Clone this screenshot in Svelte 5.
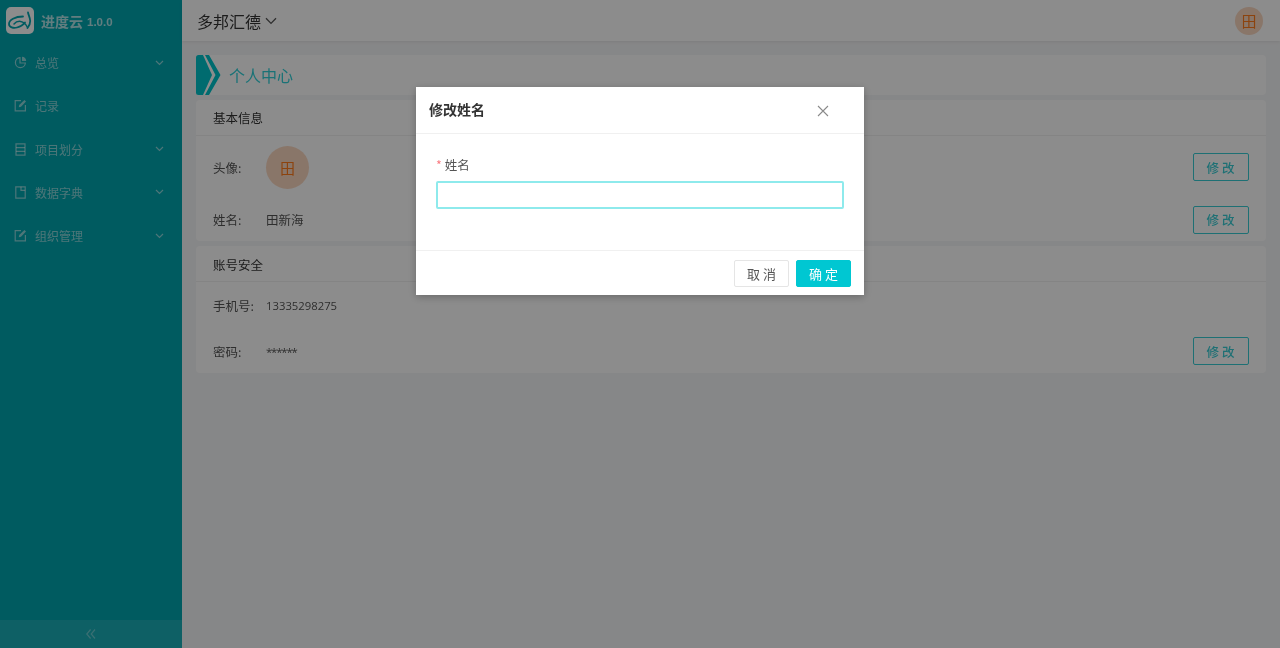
<script>
  const menu = [
    { label: '总览', icon: 'pie', arrow: true },
    { label: '记录', icon: 'edit', arrow: false },
    { label: '项目划分', icon: 'list', arrow: true },
    { label: '数据字典', icon: 'file', arrow: true },
    { label: '组织管理', icon: 'edit', arrow: true }
  ];
</script>

<div class="layout">
  <aside class="sider">
    <div class="logo">
      <div class="logo-box">
        <svg width="28" height="27" viewBox="0 0 28 27" fill="none" stroke="#00a6b0" stroke-linecap="round">
          <path d="M17 9.5C9 9.5 3 13 3 17C3 20.5 7.5 21.5 11 20.5C14.5 19.5 17.5 17.5 19 15.5" stroke-width="1.8" />
          <path d="M8 17C11 13.5 18 12.5 21.5 20.5" stroke-width="1.5" />
          <path d="M22 5.5C22.5 9 27 14.5 21.5 21" stroke-width="1.8" />
        </svg>
      </div>
      <span class="logo-name">进度云</span>
      <span class="logo-version">1.0.0</span>
    </div>
    <nav class="menu">
      {#each menu as item}
        <div class="menu-item">
          <svg class="menu-icon" width="13" height="13" viewBox="0 0 13 13" fill="none" stroke="currentColor" stroke-width="1.2">
            {#if item.icon === 'pie'}
              <path d="M6 1.6A5 5 0 1 0 11.4 7H6Z" />
              <path d="M8 .8A4.5 4.5 0 0 1 12.2 5H8Z" fill="currentColor" stroke="none" />
            {:else if item.icon === 'edit'}
              <path d="M7 1.6H1.2V11.8H11.4V6" />
              <path d="M4.8 8.2L5.2 6L10.4 1L12 2.6L7 7.8Z" fill="currentColor" stroke="none" />
            {:else if item.icon === 'list'}
              <path d="M2 .8H11V12.2H2Z" />
              <path d="M2 4.6H11M2 8.4H11" />
            {:else}
              <path d="M1.8 .8H11.2V12.2H1.8Z" />
              <path d="M7 .8V4.4H11.2" />
            {/if}
          </svg>
          <span class="menu-label">{item.label}</span>
          {#if item.arrow}
            <svg class="menu-arrow" width="9" height="6" viewBox="0 0 9 6" fill="none" stroke="currentColor" stroke-width="1.2">
              <path d="M1 1L4.5 4.5L8 1" />
            </svg>
          {/if}
        </div>
      {/each}
    </nav>
    <div class="collapse">
      <svg width="10" height="10" viewBox="0 0 10 10" fill="none" stroke="currentColor" stroke-width="1.2">
        <path d="M4.6 .5L.8 5L4.6 9.5M9 .5L5.2 5L9 9.5" />
      </svg>
    </div>
  </aside>

  <div class="right">
    <header class="topbar">
      <span class="org">多邦汇德</span>
      <svg class="org-arrow" width="12" height="8" viewBox="0 0 12 8" fill="none" stroke="currentColor" stroke-width="1.3">
        <path d="M1 1.2L6 6.4L11 1.2" />
      </svg>
      <div class="avatar small">田</div>
    </header>

    <main class="content">
      <div class="page-title">
        <svg class="chevron" width="25" height="40" viewBox="0 0 25 40">
          <path d="M2.5 0H7L16 20L7 40H2.5Q0 40 0 37.5V2.5Q0 0 2.5 0Z" fill="#00c4ca" />
          <path d="M9 0H13L24.5 20L13 40H9L19.5 20Z" fill="#00c4ca" />
        </svg>
        <span>个人中心</span>
      </div>

      <section class="card">
        <div class="card-head up">基本信息</div>
        <div class="row avatar-row">
          <span class="key">头像:</span>
          <div class="avatar">田</div>
          <button class="edit">修改</button>
        </div>
        <div class="row name-row">
          <span class="key">姓名:</span>
          <span class="val">田新海</span>
          <button class="edit">修改</button>
        </div>
      </section>

      <section class="card">
        <div class="card-head down">账号安全</div>
        <div class="row phone-row">
          <span class="key">手机号:</span>
          <span class="val digits">13335298275</span>
        </div>
        <div class="row pwd-row">
          <span class="key">密码:</span>
          <span class="val digits stars">******</span>
          <button class="edit">修改</button>
        </div>
      </section>
    </main>
  </div>
</div>

<div class="mask"></div>

<div class="modal">
  <div class="modal-head">
    <span>修改姓名</span>
    <svg width="12" height="12" viewBox="0 0 12 12" fill="none" stroke="#8a8a8a" stroke-width="1.1">
      <path d="M1 1L11 11M11 1L1 11" />
    </svg>
  </div>
  <div class="modal-body">
    <div class="field-label"><i>*</i>姓名</div>
    <input class="field-input" type="text" />
  </div>
  <div class="modal-foot">
    <button class="btn">取消</button>
    <button class="btn primary">确定</button>
  </div>
</div>

<style>
  :global(body) {
    margin: 0;
    font-family: "Noto Sans CJK SC", "Liberation Sans", sans-serif;
    overflow: hidden;
  }
  .layout {
    display: flex;
    height: 648px;
    filter: blur(0.5px);
  }
  .sider {
    width: 182px;
    flex: none;
    display: flex;
    flex-direction: column;
    background: #00a6b0;
    color: rgba(255, 255, 255, 0.55);
  }
  .logo {
    height: 41px;
    display: flex;
    align-items: center;
    padding-left: 6px;
  }
  .logo-box {
    width: 28px;
    height: 27px;
    border-radius: 5px;
    background: #fff;
    margin-right: 7px;
  }
  .logo-box svg {
    display: block;
  }
  .logo-name {
    font-size: 14px;
    font-weight: 700;
    color: rgba(255, 255, 255, 0.7);
  }
  .logo-version {
    font-size: 11.5px;
    font-weight: 700;
    font-family: "Liberation Sans", sans-serif;
    margin-left: 4px;
    margin-top: 2px;
    color: rgba(255, 255, 255, 0.7);
  }
  .menu {
    flex: 1;
  }
  .menu-item {
    height: 43.25px;
    display: flex;
    align-items: center;
    padding: 0 18px 0 14px;
    font-size: 12px;
  }
  .menu-icon {
    margin-right: 8px;
  }
  .menu-label {
    flex: 1;
  }
  .collapse {
    height: 28px;
    display: flex;
    align-items: center;
    justify-content: center;
    background: rgba(255, 255, 255, 0.1);
    color: rgba(255, 255, 255, 0.35);
  }
  .right {
    flex: 1;
    display: flex;
    flex-direction: column;
    background: #f5f6f7;
    min-width: 0;
  }
  .topbar {
    height: 41px;
    display: flex;
    align-items: center;
    padding: 0 17px 0 15px;
    background: #fff;
    box-shadow: 0 1px 3px rgba(0, 0, 0, 0.08);
    color: #333;
  }
  .org {
    font-size: 16px;
    margin-right: 4px;
  }
  .org-arrow {
    color: #555;
  }
  .avatar {
    width: 43px;
    height: 43px;
    border-radius: 50%;
    background: #fad7c0;
    color: #ff7a1a;
    font-size: 15px;
    display: flex;
    align-items: center;
    justify-content: center;
  }
  .avatar.small {
    width: 28px;
    height: 28px;
    margin-left: auto;
  }
  .content {
    padding: 14px 14px 0;
    display: flex;
    flex-direction: column;
    gap: 5px;
  }
  .page-title {
    height: 40px;
    display: flex;
    align-items: center;
    background: #fff;
    border-radius: 4px;
    color: #30d0d8;
    font-size: 16px;
  }
  .chevron {
    margin-right: 8px;
  }
  .card {
    background: #fff;
    border-radius: 4px;
    font-size: 12.5px;
    color: #555;
  }
  .card-head {
    box-sizing: border-box;
    height: 36px;
    display: flex;
    align-items: center;
    padding-left: 17px;
    color: #333;
    border-bottom: 1px solid #f0f0f0;
  }
  .card-head.up {
    padding-bottom: 1px;
  }
  .card-head.down {
    padding-top: 1px;
  }
  .row {
    display: flex;
    align-items: center;
    padding: 0 17px;
  }
  .avatar-row {
    height: 62px;
  }
  .name-row {
    height: 43px;
  }
  .phone-row {
    height: 47px;
  }
  .pwd-row {
    height: 44px;
  }
  .key {
    width: 53px;
    flex: none;
  }
  .digits {
    font-family: "Open Sans", sans-serif;
    font-size: 11.3px;
  }
  .stars {
    letter-spacing: -1.1px;
  }
  .edit {
    margin-left: auto;
    width: 56px;
    height: 28px;
    padding: 0 0 0 2px;
    border: 1px solid #38ccd4;
    border-radius: 2px;
    background: #fff;
    color: #38ccd4;
    font-family: inherit;
    font-size: 12.5px;
    font-weight: 500;
    letter-spacing: 3px;
  }
  .mask {
    position: fixed;
    inset: 0;
    background: rgba(0, 0, 0, 0.45);
  }
  .modal {
    position: fixed;
    left: 416px;
    top: 87px;
    width: 448px;
    height: 208px;
    display: flex;
    flex-direction: column;
    background: #fff;
    box-shadow: 0 2px 8px rgba(0, 0, 0, 0.25);
    color: #333;
    filter: blur(0.3px);
  }
  .modal-head {
    box-sizing: border-box;
    height: 47px;
    flex: none;
    display: flex;
    align-items: center;
    justify-content: space-between;
    padding: 0 35px 2px 13px;
    font-size: 14px;
    font-weight: 700;
    border-bottom: 1px solid #f0f0f0;
  }
  .modal-head svg {
    margin-top: 3px;
  }
  .modal-body {
    flex: 1;
    padding: 21px 20px 0;
  }
  .field-label {
    height: 20px;
    font-size: 12.5px;
    line-height: 20px;
    margin-bottom: 6px;
    color: #555;
  }
  .field-label i {
    color: #f5222d;
    opacity: 0.6;
    font-style: normal;
    margin-right: 3px;
  }
  .field-input {
    display: block;
    box-sizing: border-box;
    width: 100%;
    height: 28px;
    border: 2px solid #8eeaec;
    border-radius: 2px;
    background: #fff;
    outline: none;
  }
  .modal-foot {
    height: 45px;
    flex: none;
    box-sizing: border-box;
    display: flex;
    align-items: center;
    justify-content: flex-end;
    gap: 7px;
    padding: 1px 13px 0 0;
    border-top: 1px solid #f0f0f0;
  }
  .btn {
    width: 55px;
    height: 27px;
    padding: 0 0 1px 3px;
    border: 1px solid #e5e5e5;
    border-radius: 2px;
    background: #fff;
    color: #555;
    font-family: inherit;
    font-size: 13px;
    letter-spacing: 3px;
  }
  .btn.primary {
    border-color: #00c7d2;
    background: #00c7d2;
    color: #fff;
  }
</style>
